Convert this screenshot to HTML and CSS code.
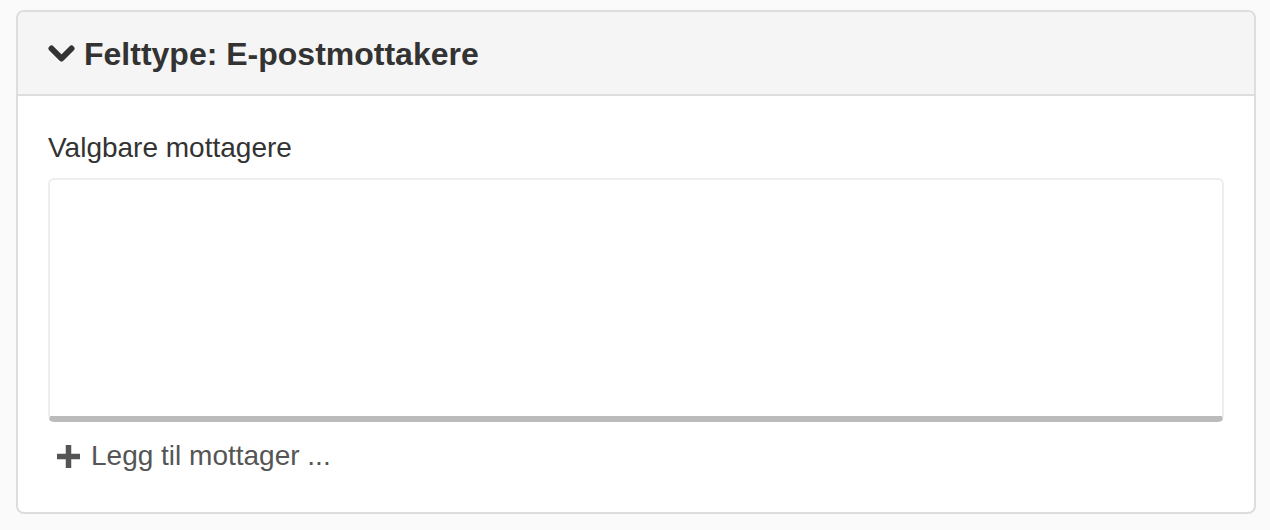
FILE: index.html
```html
<!DOCTYPE html>
<html lang="nb">
<head>
    <meta charset="UTF-8">
    <meta name="viewport" content="width=device-width, initial-scale=1.0">
    <title>Felttype: E-postmottakere</title>
    <link rel="stylesheet" href="styles.css">
</head>
<body>
    <section class="panel">
        <header class="panel-heading">
            <svg class="chevron" width="27" height="18" viewBox="0 0 27 18">
                <polyline points="3.5 3.5 13.5 13.5 23.5 3.5" fill="none" stroke="currentColor" stroke-width="6" stroke-linecap="round" stroke-linejoin="round"></polyline>
            </svg>
            <h2 class="panel-title">Felttype: E-postmottakere</h2>
        </header>
        <div class="panel-body">
            <label class="field-label">Valgbare mottagere</label>
            <div class="recipient-box"></div>
            <button class="add-link">
                <svg width="23" height="23" viewBox="0 0 23 23">
                    <path d="M11.5 0v23M0 11.5h23" stroke="currentColor" stroke-width="5.5"></path>
                </svg>
                Legg til mottager ...
            </button>
        </div>
    </section>
</body>
</html>
```

FILE: styles.css
```css
* {
    margin: 0;
    padding: 0;
    box-sizing: border-box;
}

body {
    font-family: "Liberation Sans", Arial, sans-serif;
    background-color: #fafafa;
    padding: 10px 14px 0 16px;
}

.panel {
    background-color: white;
    border: 2px solid #dddddd;
    border-radius: 8px;
    overflow: hidden;
}

.panel-heading {
    display: flex;
    align-items: center;
    gap: 9px;
    padding: 20px 30px 18px;
    height: 84px;
    background-color: #f5f5f5;
    border-bottom: 2px solid #dddddd;
    color: #333333;
}

.chevron {
    flex-shrink: 0;
}

.panel-title {
    font-size: 32px;
    font-weight: bold;
    line-height: 44px;
}

.panel-body {
    padding: 32px 30px 36px;
}

.field-label {
    display: block;
    font-size: 28px;
    line-height: 40px;
    color: #333333;
}

.recipient-box {
    margin-top: 10px;
    height: 244px;
    border: 2px solid #eeeeee;
    border-bottom: 6px solid #bbbbbb;
    border-radius: 6px;
}

.add-link {
    display: flex;
    align-items: center;
    gap: 11px;
    margin-top: 14px;
    padding-left: 9px;
    border: none;
    background: none;
    font-family: inherit;
    font-size: 28px;
    line-height: 40px;
    color: #555555;
    cursor: pointer;
}
```
